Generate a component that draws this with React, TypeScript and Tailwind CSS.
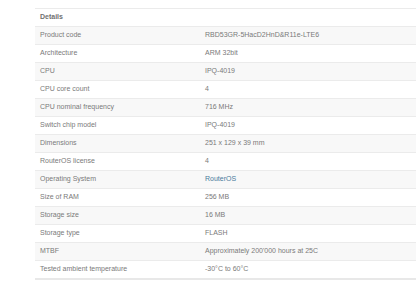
import React from 'react';

const specs: [string, string, boolean?][] = [
  ['Product code', 'RBD53GR-5HacD2HnD&R11e-LTE6'],
  ['Architecture', 'ARM 32bit'],
  ['CPU', 'IPQ-4019'],
  ['CPU core count', '4'],
  ['CPU nominal frequency', '716 MHz'],
  ['Switch chip model', 'IPQ-4019'],
  ['Dimensions', '251 x 129 x 39 mm'],
  ['RouterOS license', '4'],
  ['Operating System', 'RouterOS', true],
  ['Size of RAM', '256 MB'],
  ['Storage size', '16 MB'],
  ['Storage type', 'FLASH'],
  ['MTBF', "Approximately 200'000 hours at 25C"],
  ['Tested ambient temperature', '-30°C to 60°C'],
];

export default function App() {
  return (
    <div className="w-[416px] h-[284px] bg-white overflow-hidden pt-2 pl-[35px] font-['Liberation_Sans',Arial,sans-serif] text-[7px] text-[#7a7a7a]">
      <table className="w-[400px] border-collapse border-b-2 border-[#e8e8e8]">
        <thead>
          <tr className="h-[18px] border-t border-[#ebebeb]">
            <th className="text-left font-bold px-[5px] w-[165px] text-[#707070]">Details</th>
            <th />
          </tr>
        </thead>
        <tbody>
          {specs.map(([label, value, link], i) => (
            <tr key={label} className={`h-[18px] border-t border-[#ebebeb] ${i % 2 === 0 ? 'bg-[#f8f8f8]' : 'bg-white'}`}>
              <td className="px-[5px] font-normal">{label}</td>
              <td className="px-[5px]">
                {link ? <span className="text-[#4a7a9c]">{value}</span> : value}
              </td>
            </tr>
          ))}
        </tbody>
      </table>
    </div>
  );
}
